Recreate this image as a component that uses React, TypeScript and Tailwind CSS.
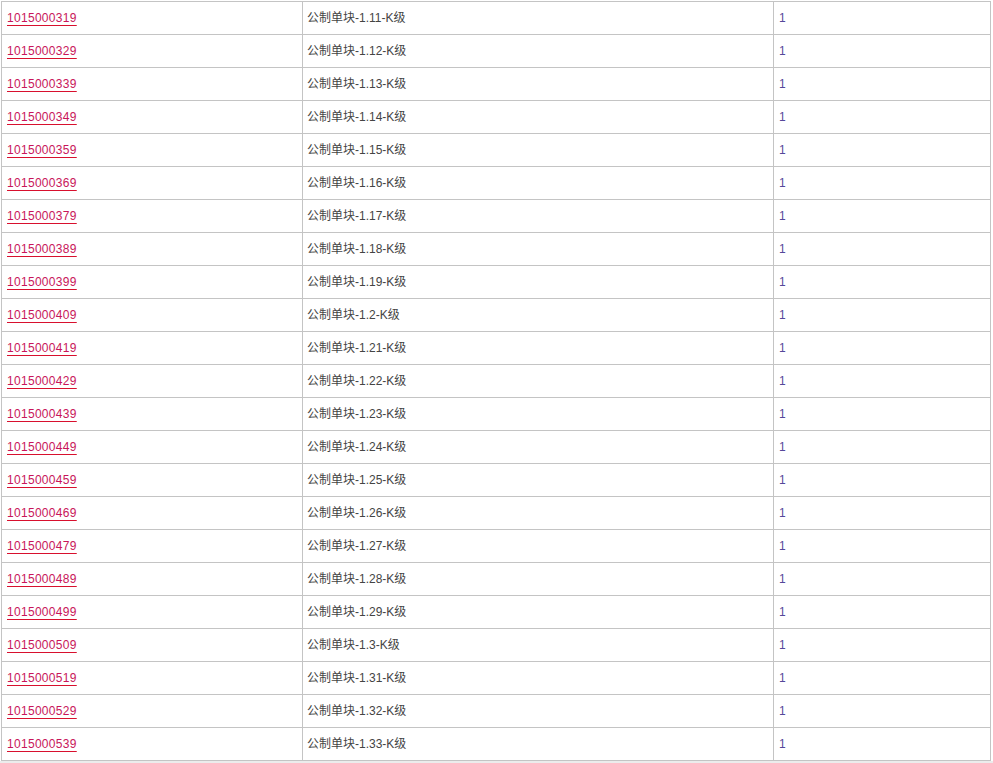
import React from "react";

const rows = [
  ["1015000319", "公制单块-1.11-K级"],
  ["1015000329", "公制单块-1.12-K级"],
  ["1015000339", "公制单块-1.13-K级"],
  ["1015000349", "公制单块-1.14-K级"],
  ["1015000359", "公制单块-1.15-K级"],
  ["1015000369", "公制单块-1.16-K级"],
  ["1015000379", "公制单块-1.17-K级"],
  ["1015000389", "公制单块-1.18-K级"],
  ["1015000399", "公制单块-1.19-K级"],
  ["1015000409", "公制单块-1.2-K级"],
  ["1015000419", "公制单块-1.21-K级"],
  ["1015000429", "公制单块-1.22-K级"],
  ["1015000439", "公制单块-1.23-K级"],
  ["1015000449", "公制单块-1.24-K级"],
  ["1015000459", "公制单块-1.25-K级"],
  ["1015000469", "公制单块-1.26-K级"],
  ["1015000479", "公制单块-1.27-K级"],
  ["1015000489", "公制单块-1.28-K级"],
  ["1015000499", "公制单块-1.29-K级"],
  ["1015000509", "公制单块-1.3-K级"],
  ["1015000519", "公制单块-1.31-K级"],
  ["1015000529", "公制单块-1.32-K级"],
  ["1015000539", "公制单块-1.33-K级"],
];

export default function App() {
  return (
    <div className="min-h-screen bg-white text-[12px] font-['Liberation_Sans','Noto_Sans_CJK_SC',sans-serif]">
      <div className="pt-px pl-px">
        <div className="w-[990px] border-t border-l border-[#c4c4c4]">
          {rows.map(([code, name]) => (
            <div key={code} className="flex h-[33px] border-b border-[#c4c4c4]">
              <div className="w-[301px] border-r border-[#c4c4c4] flex items-center pl-[5px]">
                <a
                  href="#"
                  className="text-[#c8165a] tracking-[0.3px] underline decoration-[#d8102e] underline-offset-[3px]"
                >
                  {code}
                </a>
              </div>
              <div className="w-[471px] border-r border-[#c4c4c4] flex items-center pl-[4px] text-[#444]">
                {name}
              </div>
              <div className="flex-1 border-r border-[#c4c4c4] flex items-center pl-[5px] text-[#55479a]">
                1
              </div>
            </div>
          ))}
        </div>
      </div>
      <div className="h-[3px] bg-[#ececec]" />
    </div>
  );
}
